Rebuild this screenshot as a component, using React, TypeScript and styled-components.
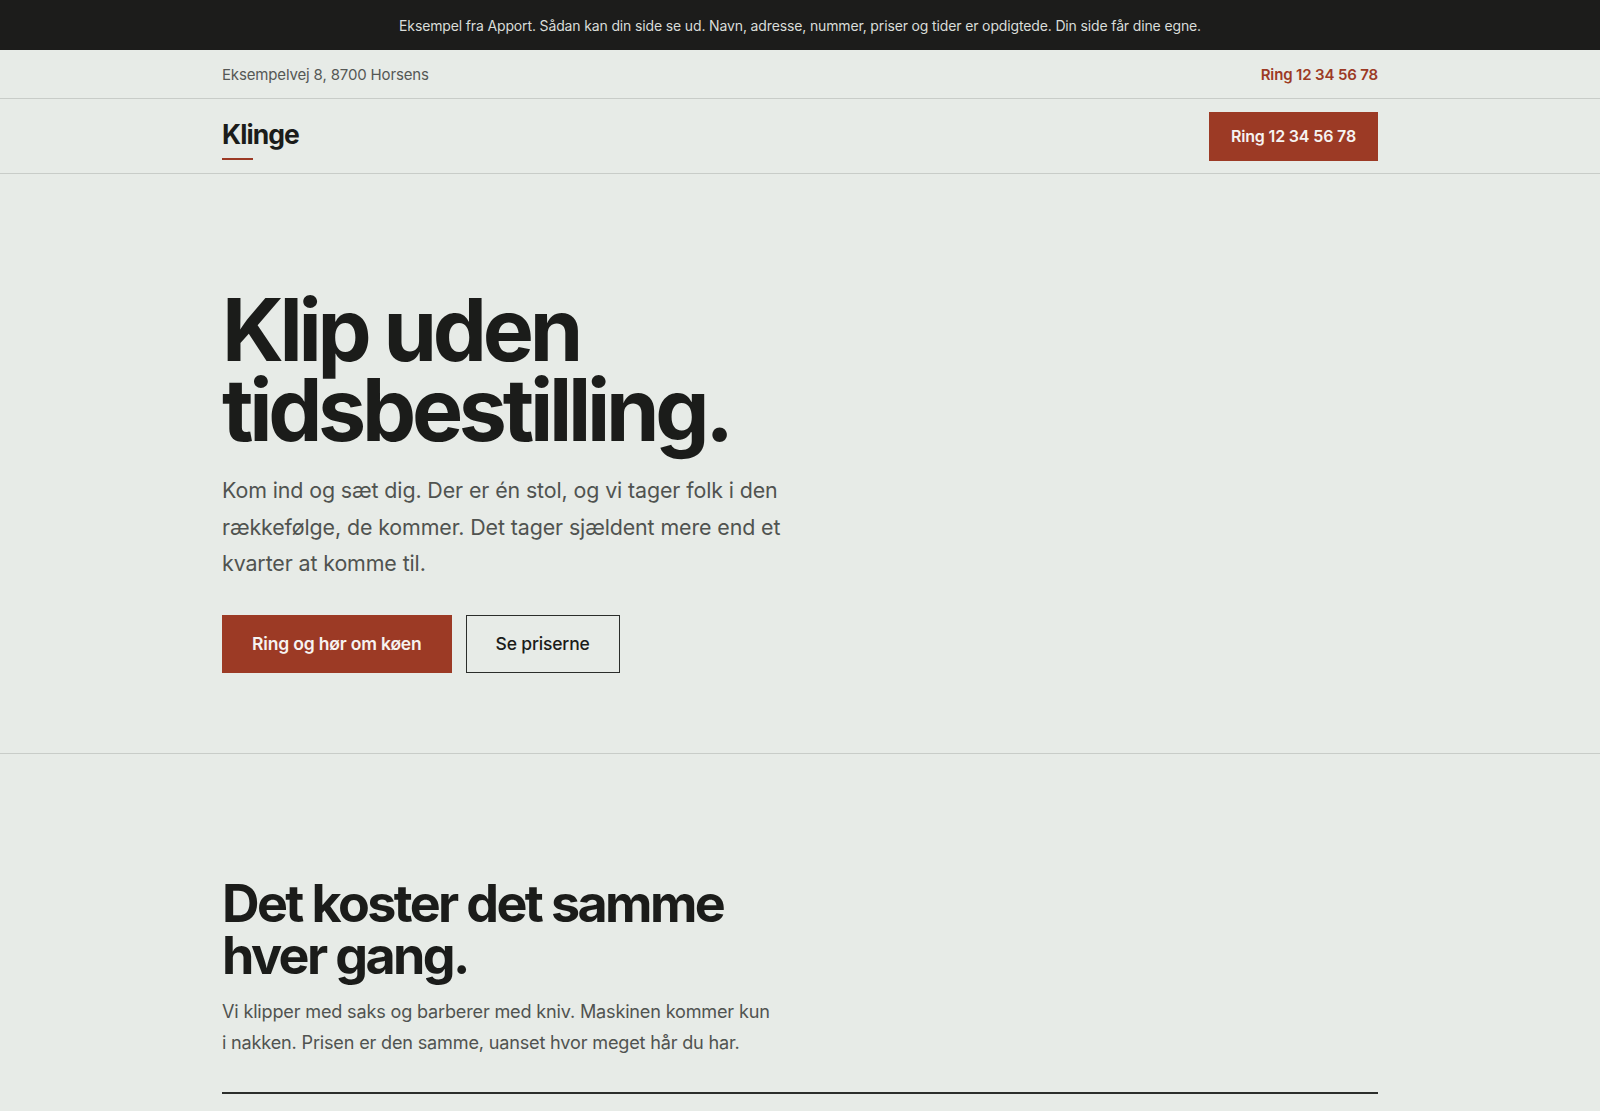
import * as React from "react";
import styled, { createGlobalStyle } from "styled-components";

const GlobalStyle = createGlobalStyle`
	* {
		box-sizing: border-box;
	}

	body {
		margin: 0;
		background: #e7ebe7;
		color: #1b1c1a;
		font-family: Inter, "Noto Sans", sans-serif;
		-webkit-font-smoothing: antialiased;
	}

	a {
		color: inherit;
		text-decoration: none;
	}
`;

const Container = styled.div`
	max-width: 1156px;
	margin: 0 auto;
	display: flex;
	align-items: center;
	justify-content: space-between;
`;

const Notice = styled.div`
	height: 50px;
	background: #1c1c1b;
	color: #d9dcd9;
	font-size: 14px;
	letter-spacing: -0.01em;
	display: flex;
	align-items: center;
	justify-content: center;
`;

const TopBar = styled.div`
	height: 49px;
	border-bottom: 1px solid #c8ccc8;
	font-size: 15px;

	${Container} {
		height: 100%;
	}
`;

const Address = styled.span`
	color: #555855;
	letter-spacing: -0.01em;
`;

const PhoneLink = styled.a`
	color: #9c3a25;
	font-weight: 600;
	letter-spacing: -0.01em;
`;

const Header = styled.header`
	height: 75px;
	border-bottom: 1px solid #c8ccc8;

	${Container} {
		height: 100%;
	}
`;

const Logo = styled.a`
	position: relative;
	font-size: 26.5px;
	font-weight: 700;
	letter-spacing: -0.035em;
	color: #1b1c1a;
	padding-bottom: 4px;

	&::after {
		content: "";
		position: absolute;
		left: 0;
		bottom: -6px;
		width: 31px;
		height: 2px;
		background: #9c3a25;
	}
`;

const Button = styled.a<{ $variant?: "primary" | "outline"; $small?: boolean }>`
	display: inline-flex;
	align-items: center;
	justify-content: center;
	height: ${(p) => (p.$small ? "49px" : "58px")};
	padding: 0 ${(p) => (p.$small ? "21px" : "29px")};
	font-size: ${(p) => (p.$small ? "16px" : "17.5px")};
	font-weight: ${(p) => (p.$variant === "outline" ? 500 : 600)};
	letter-spacing: -0.01em;
	background: ${(p) => (p.$variant === "outline" ? "transparent" : "#9c3a25")};
	color: ${(p) => (p.$variant === "outline" ? "#1b1c1a" : "#f6f3f1")};
	border: 1px solid ${(p) => (p.$variant === "outline" ? "#2b2d2b" : "#9c3a25")};
`;

const Hero = styled.section`
	padding: 116px 0 80px;
	border-bottom: 1px solid #c8ccc8;

	${Container} {
		display: block;
	}
`;

const HeroTitle = styled.h1`
	margin: 0;
	font-size: 86px;
	line-height: 80px;
	font-weight: 700;
	letter-spacing: -0.05em;
	color: #1b1c1a;
`;

const Lead = styled.p`
	margin: 22px 0 0;
	max-width: 580px;
	font-size: 21.4px;
	line-height: 36.5px;
	font-weight: 400;
	letter-spacing: -0.005em;
	color: #505350;
`;

const Actions = styled.div`
	display: flex;
	gap: 14px;
	margin-top: 33px;
`;

const Section = styled.section`
	padding: 124px 0 0;

	${Container} {
		display: block;
	}
`;

const SectionTitle = styled.h2`
	margin: 0;
	font-size: 52px;
	line-height: 52px;
	font-weight: 700;
	letter-spacing: -0.05em;
	color: #1b1c1a;
`;

const SectionText = styled.p`
	margin: 14px 0 0;
	max-width: 552px;
	font-size: 18.1px;
	line-height: 31px;
	letter-spacing: -0.01em;
	color: #505350;
`;

const Rule = styled.hr`
	margin: 34px 0 0;
	border: 0;
	height: 2px;
	background: #2b2e2b;
`;

export default function App(): JSX.Element {
	return (
		<>
			<GlobalStyle />
			<Notice>
				Eksempel fra Apport. Sådan kan din side se ud. Navn, adresse, nummer, priser og tider er opdigtede. Din side får
				dine egne.
			</Notice>

			<TopBar>
				<Container>
					<Address>Eksempelvej 8, 8700 Horsens</Address>
					<PhoneLink href="#">Ring 12 34 56 78</PhoneLink>
				</Container>
			</TopBar>

			<Header>
				<Container>
					<Logo href="#">Klinge</Logo>
					<Button href="#" $small>
						Ring 12 34 56 78
					</Button>
				</Container>
			</Header>

			<Hero>
				<Container>
					<HeroTitle>
						Klip uden
						<br />
						tidsbestilling.
					</HeroTitle>
					<Lead>
						Kom ind og sæt dig. Der er én stol, og vi tager folk i den rækkefølge, de kommer. Det tager sjældent mere end et
						kvarter at komme til.
					</Lead>
					<Actions>
						<Button href="#">Ring og hør om køen</Button>
						<Button href="#" $variant="outline">
							Se priserne
						</Button>
					</Actions>
				</Container>
			</Hero>

			<Section>
				<Container>
					<SectionTitle>
						Det koster det samme
						<br />
						hver gang.
					</SectionTitle>
					<SectionText>
						Vi klipper med saks og barberer med kniv. Maskinen kommer kun i nakken. Prisen er den samme, uanset hvor meget
						hår du har.
					</SectionText>
					<Rule />
				</Container>
			</Section>
		</>
	);
}
